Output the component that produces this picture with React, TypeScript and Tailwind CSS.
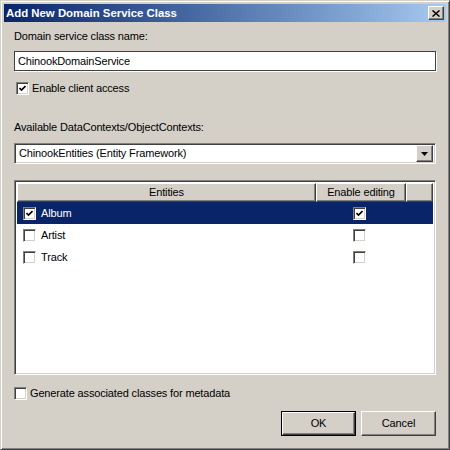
import React from 'react';

const FONT = "font-['Liberation_Sans',Arial,sans-serif]";

// classic sunken 2px bevel
const SUNKEN =
  'border border-t-[#808080] border-l-[#808080] border-b-white border-r-white shadow-[inset_1px_1px_0_#404040,inset_-1px_-1px_0_#d4d0c8]';
// classic raised 2px bevel
const RAISED =
  'border border-t-white border-l-white border-b-[#404040] border-r-[#404040] shadow-[inset_-1px_-1px_0_#808080,inset_1px_1px_0_#d4d0c8]';

function CheckBox({ checked }: { checked?: boolean }) {
  return (
    <div className={`w-[13px] h-[13px] shrink-0 bg-white flex items-center justify-center ${SUNKEN}`}>
      {checked && (
        <svg width="7" height="7" viewBox="0 0 7 7">
          <path d="M0.5 3 L2.5 5 L6.5 1" fill="none" stroke="#000" strokeWidth="1.6" />
        </svg>
      )}
    </div>
  );
}

const ROWS = [
  { name: 'Album', on: true, edit: true, selected: true },
  { name: 'Artist', on: false, edit: false, selected: false },
  { name: 'Track', on: false, edit: false, selected: false },
];

export default function App() {
  return (
    <div
      className={`w-[450px] h-[450px] bg-[#d4d0c8] p-[3px] flex flex-col text-[11px] leading-[13px] tracking-[-0.15px] text-black ${FONT} border border-t-[#d4d0c8] border-l-[#d4d0c8] border-b-[#404040] border-r-[#404040] shadow-[inset_1px_1px_0_#fff,inset_-1px_-1px_0_#808080]`}
    >
      {/* title bar */}
      <div className="h-[18px] flex items-center justify-between bg-linear-to-r from-[#0a246a] to-[#a6caf0] pl-[2px] pr-[2px]">
        <span className="text-white font-bold text-[11.4px] tracking-normal">Add New Domain Service Class</span>
        <div className={`w-[16px] h-[14px] bg-[#d4d0c8] flex items-center justify-center ${RAISED}`}>
          <svg width="8" height="7" viewBox="0 0 8 7">
            <path d="M0.5 0.5 L7.5 6.5 M7.5 0.5 L0.5 6.5" stroke="#000" strokeWidth="1.5" />
          </svg>
        </div>
      </div>

      <div className="flex flex-col px-[10px]">
        <div className="mt-[8px]">Domain service class name:</div>
        <div className="mt-[8px] h-[20px] bg-white border border-[#404040] shadow-[1px_1px_0_#fff] flex items-center pl-[3px]">
          ChinookDomainService
        </div>
        <div className="mt-[11px] ml-[2px] flex items-center gap-[3px]">
          <CheckBox checked />
          <span>Enable client access</span>
        </div>

        <div className="mt-[26px]">Available DataContexts/ObjectContexts:</div>
        <div className={`mt-[9px] h-[21px] bg-white flex items-center justify-between p-[2px] ${SUNKEN}`}>
          <span className="pl-[2px]">ChinookEntities (Entity Framework)</span>
          <div className={`w-[17px] h-[17px] bg-[#d4d0c8] flex items-center justify-center ${RAISED}`}>
            <svg width="7" height="4" viewBox="0 0 7 4">
              <path d="M0 0 H7 L3.5 4 Z" fill="#000" />
            </svg>
          </div>
        </div>

        {/* list view */}
        <div className={`mt-[16px] h-[195px] bg-white p-[2px] flex flex-col ${SUNKEN}`}>
          <div className="h-[19px] flex shrink-0">
            <div className={`w-[299px] bg-[#d4d0c8] flex items-center justify-center ${RAISED}`}>Entities</div>
            <div className={`w-[90px] bg-[#d4d0c8] flex items-center justify-center ${RAISED}`}>Enable editing</div>
            <div className={`flex-1 bg-[#d4d0c8] ${RAISED}`} />
          </div>
          <div className="flex flex-col">
            {ROWS.map((r) => (
              <div
                key={r.name}
                className={`h-[22px] flex items-center ${r.selected ? 'bg-[#0a246a] text-white' : ''}`}
              >
                <div className="w-[336px] flex items-center pl-[6px] gap-[5px]">
                  <CheckBox checked={r.on} />
                  <span>{r.name}</span>
                </div>
                <CheckBox checked={r.edit} />
              </div>
            ))}
          </div>
        </div>

        <div className="mt-[12px] flex items-center gap-[3px]">
          <CheckBox />
          <span>Generate associated classes for metadata</span>
        </div>

        <div className="mt-[11px] flex justify-end gap-[5px]">
          <div className="w-[75px] h-[25px] border border-black">
            <div className={`w-full h-full bg-[#d4d0c8] flex items-center justify-center ${RAISED}`}>OK</div>
          </div>
          <div className={`w-[75px] h-[25px] bg-[#d4d0c8] flex items-center justify-center ${RAISED}`}>Cancel</div>
        </div>
      </div>
    </div>
  );
}
